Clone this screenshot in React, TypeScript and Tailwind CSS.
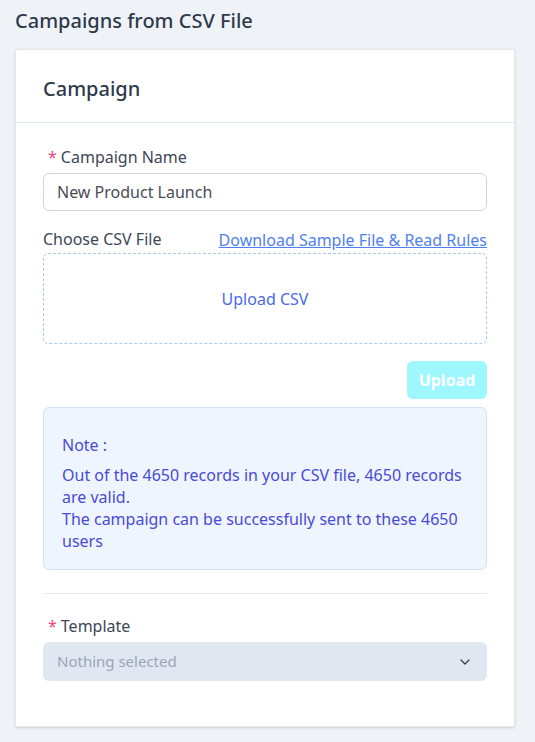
import { ChevronDown } from "lucide-react";

export default function App() {
	return (
		<div
			className="min-h-[742px] bg-[#eff3f8] px-[15px] pt-[7px] pb-4"
			style={{ fontFamily: '"Noto Sans", sans-serif' }}
		>
			<h1 className="text-[20px] font-medium text-[#2f3a4b] leading-[28px]">
				Campaigns from CSV File
			</h1>
			<div className="mt-[14px] w-[500px] bg-white border border-[#e3e8ef] shadow-sm">
				<div className="border-b border-[#e3e8ef] px-[27px] h-[73px] flex items-center">
					<h2 className="text-[20px] font-medium text-[#2f3a4b] pt-[6px]">Campaign</h2>
				</div>
				<div className="px-[27px] pt-[24px] pb-[45px]">
					<label className="block text-[16px] text-[#3d4656] leading-[20px] pl-[5px]">
						<span className="text-[#e8457c] mr-[4px]">*</span>Campaign Name
					</label>
					<div className="mt-[6px] h-[38px] rounded-[6px] border border-[#cdd4df] flex items-center px-[13px] text-[16px] text-[#4b4b55]">
						New Product Launch
					</div>

					<div className="mt-[18px] flex items-end justify-between">
						<span className="text-[16px] text-[#3d4656] leading-[20px]">Choose CSV File</span>
						<a className="text-[16px] text-[#4f7ff2] underline leading-[20px] cursor-pointer translate-y-[1px]">
							Download Sample File &amp; Read Rules
						</a>
					</div>
					<div className="mt-[4px] h-[91px] rounded-[5px] border border-dashed border-[#a8c8f4] flex items-center justify-center text-[16px] text-[#4a6ae8]">
						Upload CSV
					</div>

					<div className="mt-[17px] flex justify-end">
						<button
							type="button"
							className="h-[38px] w-[80px] rounded-[6px] bg-[#9ef6ff] text-white font-bold text-[16px]"
						>
							Upload
						</button>
					</div>

					<div className="mt-[8px] rounded-[6px] border border-[#d3e1f7] bg-[#eef5ff] px-[18px] pt-[27px] pb-[17px] text-[16px] text-[#4a4ad6]">
						<p className="leading-[20px]">Note :</p>
						<p className="mt-[9px] leading-[22px]">
							Out of the 4650 records in your CSV file, 4650 records are valid.
							<br />
							The campaign can be successfully sent to these 4650 users
						</p>
					</div>

					<div className="mt-[23px] border-t border-[#e3e8ef]" />

					<label className="mt-[22px] block text-[16px] text-[#3d4656] leading-[20px] pl-[5px]">
						<span className="text-[#e8457c] mr-[4px]">*</span>Template
					</label>
					<div className="mt-[6px] h-[39px] rounded-[6px] bg-[#e1e7f0] flex items-center justify-between px-[14px] text-[15px] text-[#9aa5b8]">
						<span>Nothing selected</span>
						<ChevronDown size={16} strokeWidth={1.8} className="text-[#2f3a4b]" />
					</div>
				</div>
			</div>
		</div>
	);
}
